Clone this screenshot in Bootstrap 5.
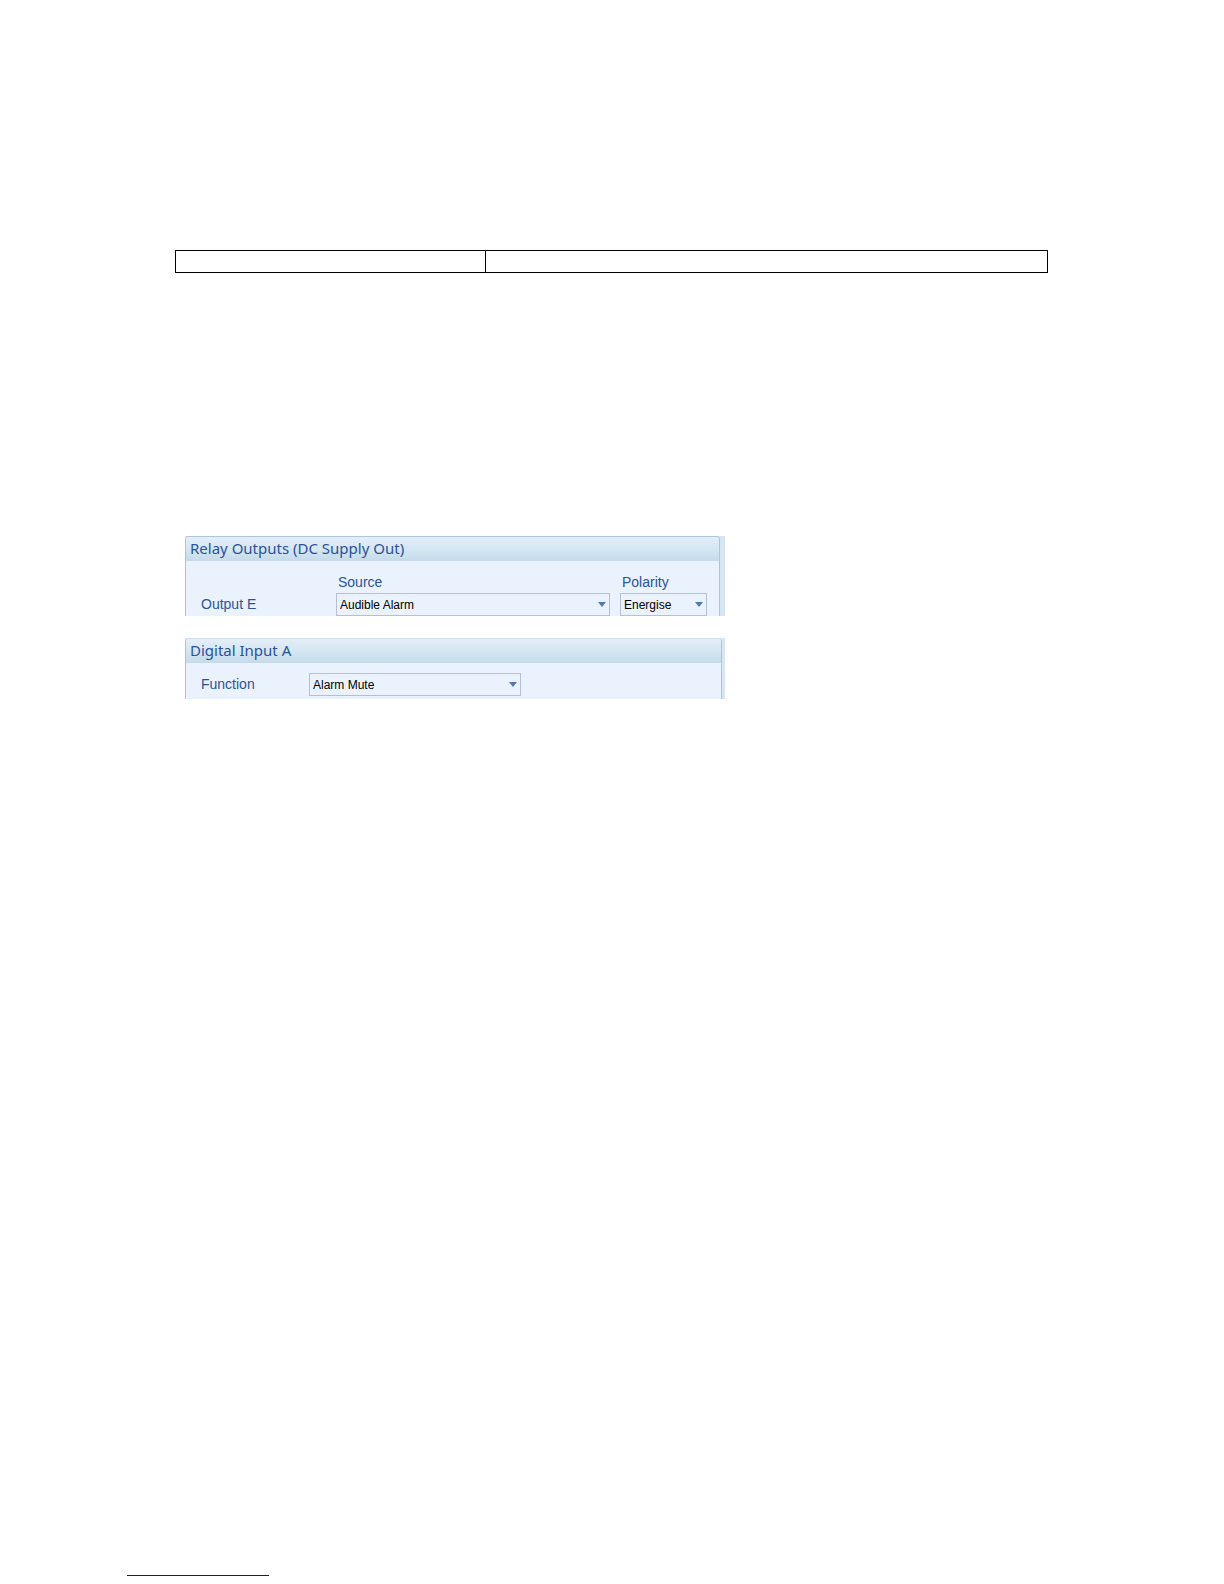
<!DOCTYPE html>
<html lang="en">
<head>
<meta charset="utf-8">
<meta name="viewport" content="width=device-width, initial-scale=1">
<title>Relay Outputs and Digital Input</title>
<link href="https://cdn.jsdelivr.net/npm/bootstrap@5.3.0/dist/css/bootstrap.min.css" rel="stylesheet">
<style>
  body { background: #fff; font-family: "Liberation Sans", Arial, sans-serif; }
  .sheet { padding: 250px 176px 0 175px; }
  .frame-table { border-collapse: collapse; table-layout: fixed; margin-bottom: 263px; }
  .frame-table td { border: 1px solid #000; height: 22px; padding: 0; }
  .frame-table td:first-child { width: 310px; }
  .panels { max-width: 550px; padding-left: 10px; gap: 22px; }
  .shell { background: #d6e6f2; padding-right: 5px; }
  .shell-narrow { padding-right: 3px; }
  .pane { background: #eaf2fe; border: 1px solid #adc5d9; border-bottom: 0; border-radius: 4px 4px 0 0; }
  .shell-narrow .pane { border-top-color: #d3e0ec; }
  .pane-title { margin: 0; padding: 0 0 2px 4px; height: 24px; line-height: 22px; font-family: "Noto Sans", "Open Sans", sans-serif; font-size: 15px; font-weight: 400; color: #2b529c; background: linear-gradient(#e4eef8, #d5e7f3 50%, #c6daeb); border-radius: 3px 3px 0 0; }
  .fields { display: grid; padding-left: 15px; }
  .fields-relay { grid-template-columns: 135px minmax(0, 274px) 97px; padding-top: 11px; }
  .fields-relay .pol { margin-left: 10px; }
  .fields-input { grid-template-columns: 108px minmax(0, 212px); padding-top: 10px; padding-bottom: 3px; }
  .caption { font-size: 14px; line-height: 20px; color: #2b529c; }
  .caption-top { padding: 0 0 1px 2px; }
  .caption-side { line-height: 23px; }
  .pick { height: 23px; padding: 1px 20px 0 3px; font-family: "Liberation Sans", Arial, sans-serif; font-size: 12px; line-height: 21px; color: #000; border: 1px solid #b3c0d6; border-radius: 0; background-color: #eaf3fd; background-size: 8px 5px; background-position: right 3px center;
    background-image: url("data:image/svg+xml,%3Csvg xmlns='http://www.w3.org/2000/svg' viewBox='0 0 8 5'%3E%3Cpath d='M0 0h8L4 5z' fill='%235478ae'/%3E%3C/svg%3E"); }
  .foot { padding: 0 0 8px 127px; }
  .foot-link { width: 142px; border-bottom: 1px solid #16167e; height: 16px; }
</style>
<script src="https://cdn.jsdelivr.net/npm/bootstrap@5.3.0/dist/js/bootstrap.bundle.min.js"></script>
</head>
<body class="d-flex flex-column min-vh-100">
<main class="sheet flex-grow-1">
  <table class="frame-table w-100"><tbody><tr><td></td><td></td></tr></tbody></table>
  <div class="panels d-flex flex-column">
    <section class="shell">
      <div class="pane">
        <h2 class="pane-title">Relay Outputs (DC Supply Out)</h2>
        <div class="fields fields-relay">
          <span></span>
          <label class="caption caption-top" for="source">Source</label>
          <label class="caption caption-top pol" for="polarity">Polarity</label>
          <label class="caption caption-side" for="source">Output E</label>
          <select class="form-select pick" id="source"><option>Audible Alarm</option></select>
          <div class="pol"><select class="form-select pick" id="polarity"><option>Energise</option></select></div>
        </div>
      </div>
    </section>
    <section class="shell shell-narrow">
      <div class="pane">
        <h2 class="pane-title">Digital Input A</h2>
        <div class="fields fields-input">
          <label class="caption caption-side" for="function">Function</label>
          <select class="form-select pick" id="function"><option>Alarm Mute</option></select>
        </div>
      </div>
    </section>
  </div>
</main>
<footer class="foot"><div class="foot-link"></div></footer>
</body>
</html>
